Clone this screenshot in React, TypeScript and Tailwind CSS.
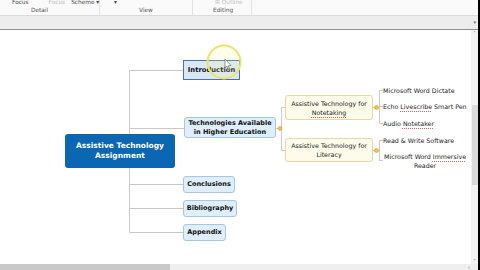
import React from 'react';

const font = { fontFamily: '"DejaVu Sans", Verdana, sans-serif' };

function TopicNode({ label, className }: { label: React.ReactNode; className: string }) {
  return (
    <div
      className={`absolute flex items-center justify-center rounded-[3px] border border-[#a9c6df] bg-[#deeefb] text-[6.5px] font-bold leading-[9px] text-[#111] ${className}`}
    >
      {label}
    </div>
  );
}

function SubNode({ children, className }: { children: React.ReactNode; className: string }) {
  return (
    <div
      className={`absolute flex items-center justify-center rounded-[3px] border border-[#e2d9a6] bg-[#fdfbe9] text-center text-[6.3px] leading-[9px] text-[#222] ${className}`}
    >
      {children}
    </div>
  );
}

// spell-check marks
function Squiggle({ children }: { children: React.ReactNode }) {
  return <span className="underline decoration-dotted decoration-[#e06060] decoration-1 underline-offset-[1.5px]">{children}</span>;
}

function Dot({ x, y }: { x: number; y: number }) {
  return <circle cx={x} cy={y} r={2} fill="#f2c24a" stroke="#d39a26" strokeWidth={0.6} />;
}

export default function App() {
  return (
    <div className="flex h-[270px] w-[480px] flex-col overflow-hidden border-r-2 border-black bg-white" style={font}>
      {/* Ribbon (cut off at top) */}
      <div className="flex h-[15px] shrink-0 bg-[#fafafa] text-[5.8px] leading-[7px] text-[#444]">
        <div className="flex w-[100px] flex-col border-r border-[#e2e2e2]">
          <div className="-mt-[1px] flex h-[8px] items-start whitespace-nowrap pl-[12px]">
            <span>Focus</span>
            <span className="ml-[20px] text-[#bbb]">Focus</span>
            <span className="ml-[6px]">Scheme ▾</span>
          </div>
          <div className="pl-[31px] text-[#555]">Detail</div>
        </div>
        <div className="flex w-[93px] flex-col border-r border-[#e2e2e2]">
          <div className="-mt-[1px] flex h-[8px] items-start pl-[14px]">
            <span>▾</span>
          </div>
          <div className="text-center text-[#555]">View</div>
        </div>
        <div className="flex w-[59px] flex-col border-r border-[#e2e2e2]">
          <div className="-mt-[1px] flex h-[8px] items-start whitespace-nowrap pl-[22px] text-[#c4c4c4]">
            <span>⊞ Outline</span>
          </div>
          <div className="pl-[20px] text-[#555]">Editing</div>
        </div>
      </div>

      {/* Bar under ribbon */}
      <div className="flex h-[15px] shrink-0 items-center justify-end border-t border-[#dcdcdc] border-b border-b-[#8e8e8e] bg-[#ededed] pr-[2px] text-[5px] text-[#666]">
        ▾
      </div>

      {/* Canvas + vertical scrollbar */}
      <div className="flex min-h-0 flex-1">
        <div className="relative flex-1 overflow-hidden">
          <svg className="absolute inset-0" width="471" height="235">
            <g stroke="#c9c9c9" strokeWidth={1} fill="none">
              <path d="M129.5 40 V202.5" />
              <path d="M129.5 40.5 H183 M129.5 98.5 H184 M129.5 154.5 H183 M129.5 178.5 H183 M129.5 202.5 H183" />
              <path d="M276 98.5 H281.5 M281.5 77 V120 M281.5 77.5 H285 M281.5 120.5 H285" />
              <path d="M373 77.5 H379.5 M379.5 60 V93 M379.5 60.5 H383 M379.5 76.5 H383 M379.5 93.5 H383" />
              <path d="M373 120.5 H379.5 M379.5 110 V131 M379.5 110.5 H383 M379.5 130.5 H383" />
            </g>
            <Dot x={280} y={98.5} />
            <Dot x={376.5} y={77.5} />
            <Dot x={376.5} y={120.5} />
          </svg>

          {/* Central topic */}
          <div className="absolute left-[65px] top-[104px] flex h-[34px] w-[110px] items-center justify-center rounded-[3px] bg-[#0b67b2] text-center text-[7.5px] font-bold leading-[10px] text-white">
            Assistive Technology
            <br />
            Assignment
          </div>

          {/* Selected topic */}
          <div className="absolute left-[183px] top-[30px] flex h-[20px] w-[57px] items-center justify-center border border-[#4d6fae] bg-[#d9e8f7] text-[6.8px] font-bold text-[#111]">
            Introduction
          </div>

          <TopicNode
            className="left-[184px] top-[87px] h-[21px] w-[92px] text-center"
            label={
              <>
                Technologies Available
                <br />
                in Higher Education
              </>
            }
          />
          <TopicNode className="left-[183px] top-[146px] h-[17px] w-[52px]" label="Conclusions" />
          <TopicNode className="left-[183px] top-[170px] h-[17px] w-[54px]" label="Bibliography" />
          <TopicNode className="left-[183px] top-[194px] h-[17px] w-[43px]" label="Appendix" />

          <SubNode className="left-[285px] top-[65px] h-[25px] w-[88px]">
            <span>
              Assistive Technology for
              <br />
              <Squiggle>Notetaking</Squiggle>
            </span>
          </SubNode>
          <SubNode className="left-[285px] top-[108px] h-[24px] w-[88px]">
            <span>
              Assistive Technology for
              <br />
              Literacy
            </span>
          </SubNode>

          {/* Leaf items */}
          <div className="absolute left-[383px] top-[56px] whitespace-nowrap text-[6.3px] leading-[9px] text-[#222]">
            Microsoft Word Dictate
          </div>
          <div className="absolute left-[383px] top-[72px] whitespace-nowrap text-[6.3px] leading-[9px] text-[#222]">
            Echo <Squiggle>Livescribe</Squiggle> Smart Pen
          </div>
          <div className="absolute left-[383px] top-[89px] whitespace-nowrap text-[6.3px] leading-[9px] text-[#222]">
            Audio <Squiggle>Notetaker</Squiggle>
          </div>
          <div className="absolute left-[383px] top-[106px] whitespace-nowrap text-[6.3px] leading-[9px] text-[#222]">
            Read &amp; Write Software
          </div>
          <div className="absolute left-[384px] top-[122px] whitespace-nowrap text-center text-[6.3px] leading-[9px] text-[#222]">
            Microsoft Word <Squiggle>Immersive</Squiggle>
            <br />
            Reader
          </div>

          {/* Cursor highlight */}
          <svg className="absolute left-[205px] top-[13px]" width="40" height="40">
            <circle cx={19} cy={19} r={16.5} fill="rgba(250,245,150,0.18)" stroke="#e9e46a" strokeWidth={2} />
            <path d="M20 16 L20 25 L22 23 L24 27 L25 26.5 L23.3 22.7 L26 22.5 Z" fill="#fff" stroke="#555" strokeWidth={0.6} />
          </svg>
        </div>

        {/* Vertical scrollbar */}
        <div className="flex w-[7px] flex-col items-center bg-[#f3f3f3] text-[5px] leading-[6px] text-[#777]">
          <span>˄</span>
          <div className="mt-[69px] h-[80px] w-[6px] bg-[#dadada]" />
          <div className="flex-1" />
          <span>˅</span>
        </div>
      </div>

      {/* Horizontal scrollbar */}
      <div className="flex h-[6px] shrink-0 bg-[#efefef]">
        <div className="h-full w-[170px] bg-[#c9c9c9]" />
        <div className="flex flex-1 items-center justify-end pr-[8px] text-[5px] leading-none text-[#666]">›</div>
      </div>
    </div>
  );
}
